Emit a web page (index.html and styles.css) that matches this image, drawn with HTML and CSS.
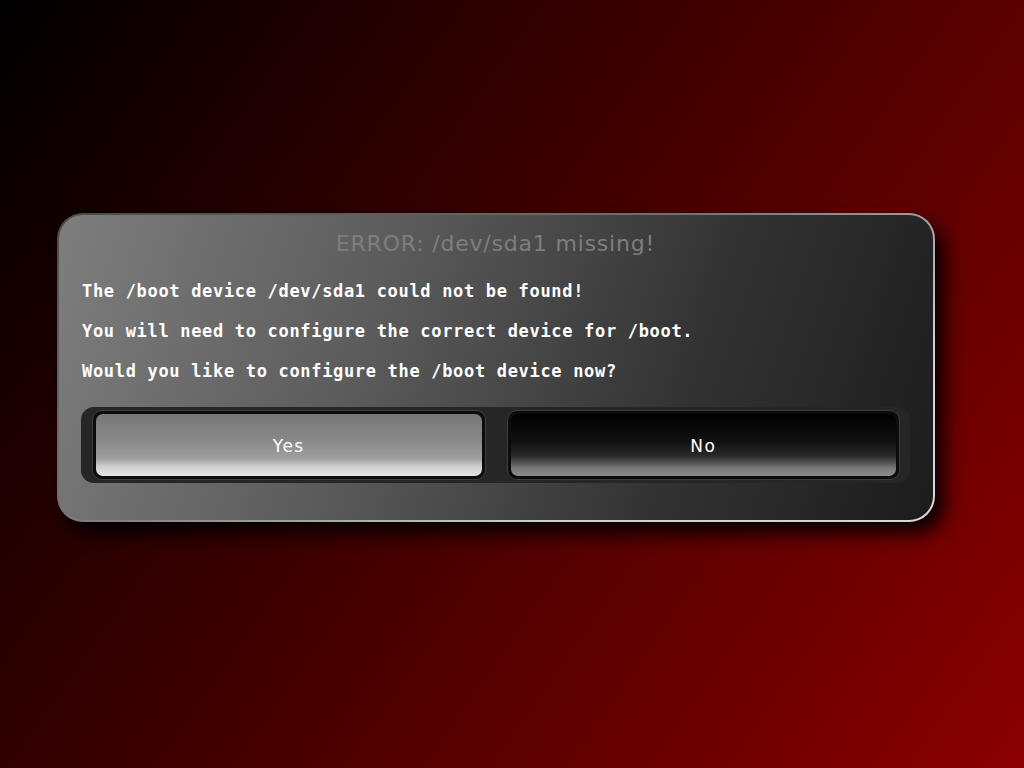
FILE: index.html
```html
<!DOCTYPE html>
<html>
<head>
<meta charset="utf-8">
<link rel="stylesheet" href="styles.css">
</head>
<body>
<div class="dialog">
  <div class="dialog-inner">
    <div class="title">ERROR: /dev/sda1 missing!</div>
    <div class="message">
      <p>The /boot device /dev/sda1 could not be found!</p>
      <p>You will need to configure the correct device for /boot.</p>
      <p>Would you like to configure the /boot device now?</p>
    </div>
    <div class="buttons">
      <div class="btn btn-yes"><div class="face">Yes</div></div>
      <div class="btn btn-no"><div class="face">No</div></div>
    </div>
  </div>
</div>
</body>
</html>
```
FILE: styles.css
```css
html, body {
  margin: 0;
  padding: 0;
}
body {
  width: 1024px;
  height: 768px;
  overflow: hidden;
  box-sizing: border-box;
  padding: 213px 0 0 57px;
  background: linear-gradient(125deg, #000 0%, #8b0000 100%);
}
.dialog {
  width: 878px;
  height: 309px;
  box-sizing: border-box;
  padding: 2px;
  border-radius: 26px;
  background: linear-gradient(155deg, #4a4a4a 0%, #707070 40%, #d0d0d0 75%, #d8d8d8 100%);
  box-shadow: 9px 11px 20px rgba(0, 0, 0, 0.95);
}
.dialog-inner {
  height: 100%;
  box-sizing: border-box;
  border-radius: 24px;
  padding: 18px 23px 0 22px;
  background: linear-gradient(108deg, #7e7e7e 0%, #5c5c5c 35%, #333 70%, #1c1c1c 100%);
}
.title {
  height: 22px;
  line-height: 22px;
  text-align: center;
  font-family: "DejaVu Sans", sans-serif;
  font-size: 22px;
  letter-spacing: 0.8px;
  color: #7e7e7e;
}
.message {
  margin-top: 15px;
  font-family: "DejaVu Sans Mono", monospace;
  font-weight: bold;
  font-size: 17px;
  letter-spacing: 0.68px;
  color: #fff;
}
.message p {
  margin: 0;
  height: 40px;
  line-height: 42px;
  padding-left: 1px;
  white-space: nowrap;
}
.buttons {
  margin-top: 17px;
  height: 76px;
  box-sizing: border-box;
  display: flex;
  gap: 21px;
  padding: 3px 10px 3px 11px;
  border-radius: 13px;
  background: #262626;
}
.btn {
  flex: 1;
  box-sizing: border-box;
  height: 70px;
  padding: 3px;
  border-radius: 10px;
  border: 1px solid #3e3e3e;
  background: #0c0c0c;
}
.face {
  height: 100%;
  border-radius: 7px;
  display: flex;
  align-items: center;
  justify-content: center;
  padding-top: 1px;
  box-sizing: border-box;
  font-family: "DejaVu Sans", sans-serif;
  font-size: 17px;
  letter-spacing: 1.5px;
  color: #fff;
}
.btn-yes .face {
  background: linear-gradient(180deg, #777 0%, #8a8a8a 45%, #a0a0a0 72%, #cfcfcf 85%, #e4e4e4 100%);
}
.btn-no .face {
  background: linear-gradient(180deg, #000 0%, #111 45%, #2a2a2a 68%, #7a7a7a 88%, #8c8c8c 100%);
}
```
